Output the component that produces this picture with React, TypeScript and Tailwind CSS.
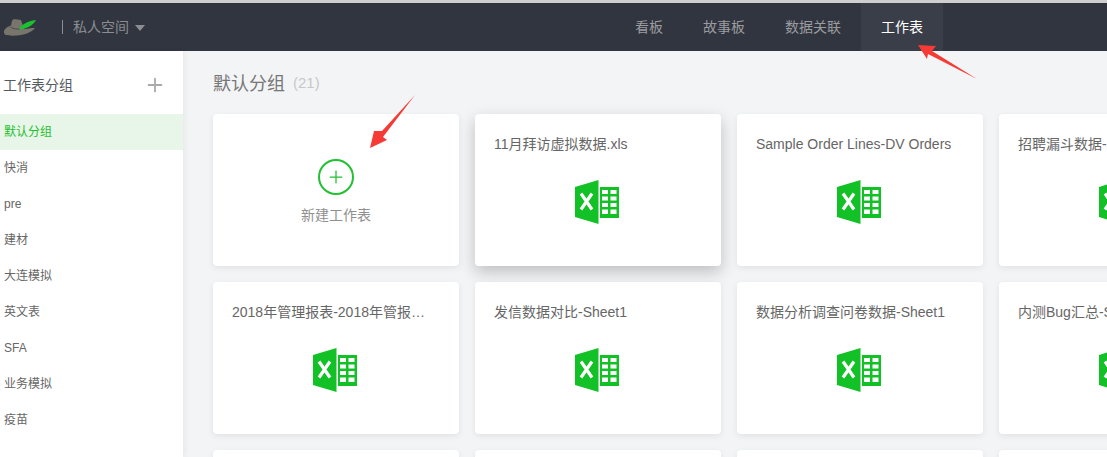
import React from 'react';
import { Plus } from 'lucide-react';

const groups = ['默认分组', '快消', 'pre', '建材', '大连模拟', '英文表', 'SFA', '业务模拟', '疫苗'];

const sheets = [
  '11月拜访虚拟数据.xls',
  'Sample Order Lines-DV Orders',
  '招聘漏斗数据-Sheet1',
  '2018年管理报表-2018年管报表汇总',
  '发信数据对比-Sheet1',
  '数据分析调查问卷数据-Sheet1',
  '内测Bug汇总-Sheet1',
];

const nav = ['看板', '故事板', '数据关联', '工作表'];

const ExcelIcon = () => (
  <svg width="44" height="44" viewBox="0 0 44 44" className="block">
    <path d="M0 7 L23.500 0 V44 L0 37 Z" fill="#12c126" />
    <path d="M6 13.500 L17 29.500 M17 13.500 L6 29.500" stroke="#fff" strokeWidth="3.200" fill="none" />
    <path d="M25 7 H44 V38 H25 Z" fill="#12c126" />
    <path
      d="M27 10 h6 v4 h-6 z M35.500 10 h6 v4 h-6 z M27 16.500 h6 v4 h-6 z M35.500 16.500 h6 v4 h-6 z M27 23 h6 v4 h-6 z M35.500 23 h6 v4 h-6 z M27 29.500 h6 v4.500 h-6 z M35.500 29.500 h6 v4.500 h-6 z"
      fill="#fff"
    />
  </svg>
);

const Logo = () => (
  <svg width="34" height="20" viewBox="0 0 34 20" className="block">
    <path
      d="M1 14 C2 11 6 9 8 8.500 C8.500 6 9 3 10 2.500 C12 2 15 3 18 3 L19 6 L21 12 C25 11.500 29 11 32 11 C30 14 24 17 18 18 C12 19 4 19 2 17.500 C1 16.500 0.700 15 1 14 Z"
      fill="#77756c"
    />
    <path d="M7.500 10 C10 12 14 12.500 17 12" stroke="#4b4c4c" strokeWidth="1" fill="none" />
    <path d="M16 12.500 C18 8 24 4 33 3 C31 7 26 11 19 12 Z" fill="#19c22e" />
  </svg>
);

const App: React.FC = () => {
  return (
    <div className="relative h-[457px] w-[1107px] overflow-hidden bg-[#f3f4f6] font-['Liberation_Sans','Noto_Sans_CJK_SC',sans-serif]">
      <div className="h-[3px] bg-[#cfcfcf]" />

      <header className="flex h-[48px] items-center bg-[#31353f]">
        <div className="ml-[3px]">
          <Logo />
        </div>
        <div className="ml-[25px] h-[14px] w-px bg-[#8b8e94]" />
        <span className="ml-[10px] text-sm text-[#8b8d92]">私人空间</span>
        <span className="ml-[6px] mt-[1px] h-0 w-0 border-x-[5.5px] border-t-[6px] border-x-transparent border-t-[#8b8d92]" />
        <nav className="ml-[470px] flex h-full">
          {nav.map((n, i) => (
            <div
              key={n}
              className={
                i === 3
                  ? 'flex h-full items-center bg-[#3a3e48] px-5 text-sm text-white'
                  : 'flex h-full items-center px-5 text-sm text-[#9b9c9f]'
              }
            >
              {n}
            </div>
          ))}
        </nav>
      </header>

      <div className="flex h-[406px]">
        <aside className="w-[183px] shrink-0 bg-white shadow-[2px_0_6px_rgba(0,0,0,0.05)]">
          <div className="flex h-[63px] items-center justify-between pl-[3px] pr-[17px] pt-[4px] text-sm text-[#555a60]">
            <span>工作表分组</span>
            <Plus size={22} strokeWidth={2} className="text-[#aaaaaa]" />
          </div>
          <ul>
            {groups.map((g, i) => (
              <li
                key={g}
                className={
                  i === 0
                    ? 'flex h-9 items-center bg-[#e8f6e9] pl-1 text-xs text-[#1fc02f]'
                    : 'flex h-9 items-center pl-1 text-xs text-[#666666]'
                }
              >
                {g}
              </li>
            ))}
          </ul>
        </aside>

        <main className="min-w-0 flex-1 overflow-hidden pl-[30px]">
          <div className="flex h-[63px] items-center pt-[2px]">
            <h2 className="text-lg font-normal text-[#777777]">默认分组</h2>
            <span className="ml-2 text-[15px] text-[#c8c8c8]">(21)</span>
          </div>
          <div className="grid grid-cols-[repeat(4,246px)] gap-4">
            <div className="flex h-[152px] flex-col items-center rounded bg-white pt-[45px] shadow-[0_2px_6px_rgba(0,0,0,0.08)]">
              <div className="flex h-9 w-9 items-center justify-center rounded-full border-2 border-[#22c033]">
                <Plus size={20} strokeWidth={1.5} className="text-[#22c033]" />
              </div>
              <span className="mt-[10px] text-sm text-[#8f8f8f]">新建工作表</span>
            </div>
            {sheets.map((s, i) => (
              <div
                key={s}
                className={
                  i === 0
                    ? 'flex h-[152px] flex-col rounded bg-white pl-[19px] pr-[30px] pt-[20px] shadow-[0_6px_16px_rgba(0,0,0,0.22)]'
                    : 'flex h-[152px] flex-col rounded bg-white pl-[19px] pr-[30px] pt-[20px] shadow-[0_2px_6px_rgba(0,0,0,0.08)]'
                }
              >
                <p className="truncate text-sm leading-[20px] text-[#666666]">{s}</p>
                <div className="ml-[81px] mt-[26px]">
                  <ExcelIcon />
                </div>
              </div>
            ))}
            {[0, 1, 2, 3].map((k) => (
              <div key={k} className="h-[152px] rounded bg-white shadow-[0_2px_6px_rgba(0,0,0,0.08)]" />
            ))}
          </div>
        </main>
      </div>

      {/* red annotation arrows drawn over the screenshot */}
      <svg width="1107" height="457" className="pointer-events-none absolute left-0 top-0">
        <path d="M918 45 L936 46 L932 51 L977 79 L928 54 L927 59 Z" fill="#f63a36" />
        <path d="M415 95 L382 131 L374 131 L370 148 L387 140 L383 137 Z" fill="#f63a36" />
      </svg>
    </div>
  );
};

export default App;
